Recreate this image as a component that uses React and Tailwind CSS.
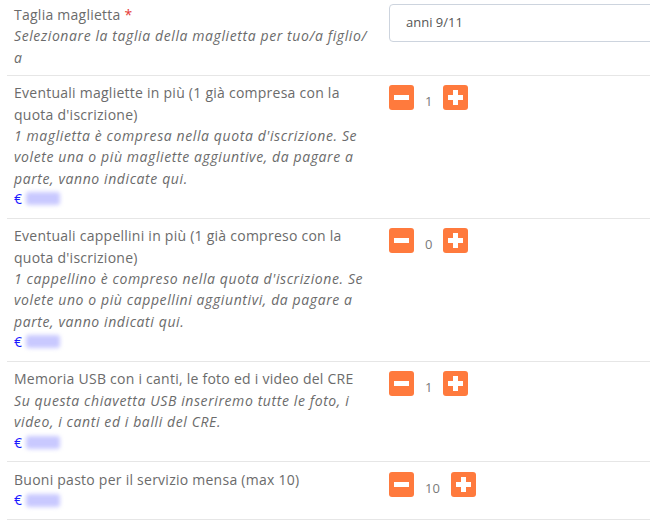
import { useState } from "react";

const font = { fontFamily: '"Open Sans", "Liberation Sans", sans-serif' };

function Price() {
  return (
    <div className="flex items-center h-[20px] text-[#1a1aff]">
      <span className="text-[14px]">€</span>
      <span className="ml-[4px] w-[34px] h-[13px] rounded-[3px] bg-[#c9c9ff] blur-[2px]" />
    </div>
  );
}

function Stepper({ initial }) {
  const [n, setN] = useState(initial);
  return (
    <div className="flex items-end mt-[3px]">
      <button
        type="button"
        onClick={() => setN(v => Math.max(0, v - 1))}
        className="w-[25px] h-[25px] rounded-[3px] bg-[#ff7a3d] flex items-center justify-center"
      >
        <span className="block w-[15px] h-[5px] bg-white" />
      </button>
      <span className="px-[11px] text-[13px] leading-[18px] text-[#7a7a7a]">{n}</span>
      <button
        type="button"
        onClick={() => setN(v => v + 1)}
        className="relative w-[25px] h-[25px] rounded-[3px] bg-[#ff7a3d] flex items-center justify-center"
      >
        <span className="absolute w-[15px] h-[5px] bg-white" />
        <span className="absolute w-[5px] h-[15px] bg-white" />
      </button>
    </div>
  );
}

function Row({ label, required, help, price, first, children }) {
  return (
    <div className={`flex border-b border-[#e6e6e6] ${first ? "pt-[4px] pb-[7px]" : "pt-[6.5px] pb-[9px]"}`}>
      <div className="w-[378px] shrink-0 pl-[7px] pr-[14px] text-[14px] leading-[21.3px] text-[#6b6b6b]">
        <div className="tracking-[0.25px]">
          {label}
          {required && <span className="text-[#e53935]"> *</span>}
        </div>
        {help && <div className="italic tracking-[0.6px]">{help}</div>}
        {price && <Price />}
      </div>
      <div className="flex-1 pl-[4px]">{children}</div>
    </div>
  );
}

export default function App() {
  return (
    <div className="w-[650px] h-[525px] overflow-hidden bg-white" style={font}>
      <div className="ml-[7px] w-[700px]">
        <Row
          first
          label="Taglia maglietta"
          required
          help={<>Selezionare la taglia della maglietta per tuo/a figlio/<wbr />a</>}
        >
          <div className="h-[38px] w-[320px] rounded-[4px] border border-[#cdd4de] flex items-center px-[16px] text-[13px] text-[#555]">
            anni 9/11
          </div>
        </Row>
        <Row
          label="Eventuali magliette in più (1 già compresa con la quota d'iscrizione)"
          help="1 maglietta è compresa nella quota d'iscrizione. Se volete una o più magliette aggiuntive, da pagare a parte, vanno indicate qui."
          price
        >
          <Stepper initial={1} />
        </Row>
        <Row
          label="Eventuali cappellini in più (1 già compreso con la quota d'iscrizione)"
          help="1 cappellino è compreso nella quota d'iscrizione. Se volete uno o più cappellini aggiuntivi, da pagare a parte, vanno indicati qui."
          price
        >
          <Stepper initial={0} />
        </Row>
        <Row
          label="Memoria USB con i canti, le foto ed i video del CRE"
          help="Su questa chiavetta USB inseriremo tutte le foto, i video, i canti ed i balli del CRE."
          price
        >
          <Stepper initial={1} />
        </Row>
        <Row label="Buoni pasto per il servizio mensa (max 10)" price>
          <Stepper initial={10} />
        </Row>
      </div>
    </div>
  );
}
